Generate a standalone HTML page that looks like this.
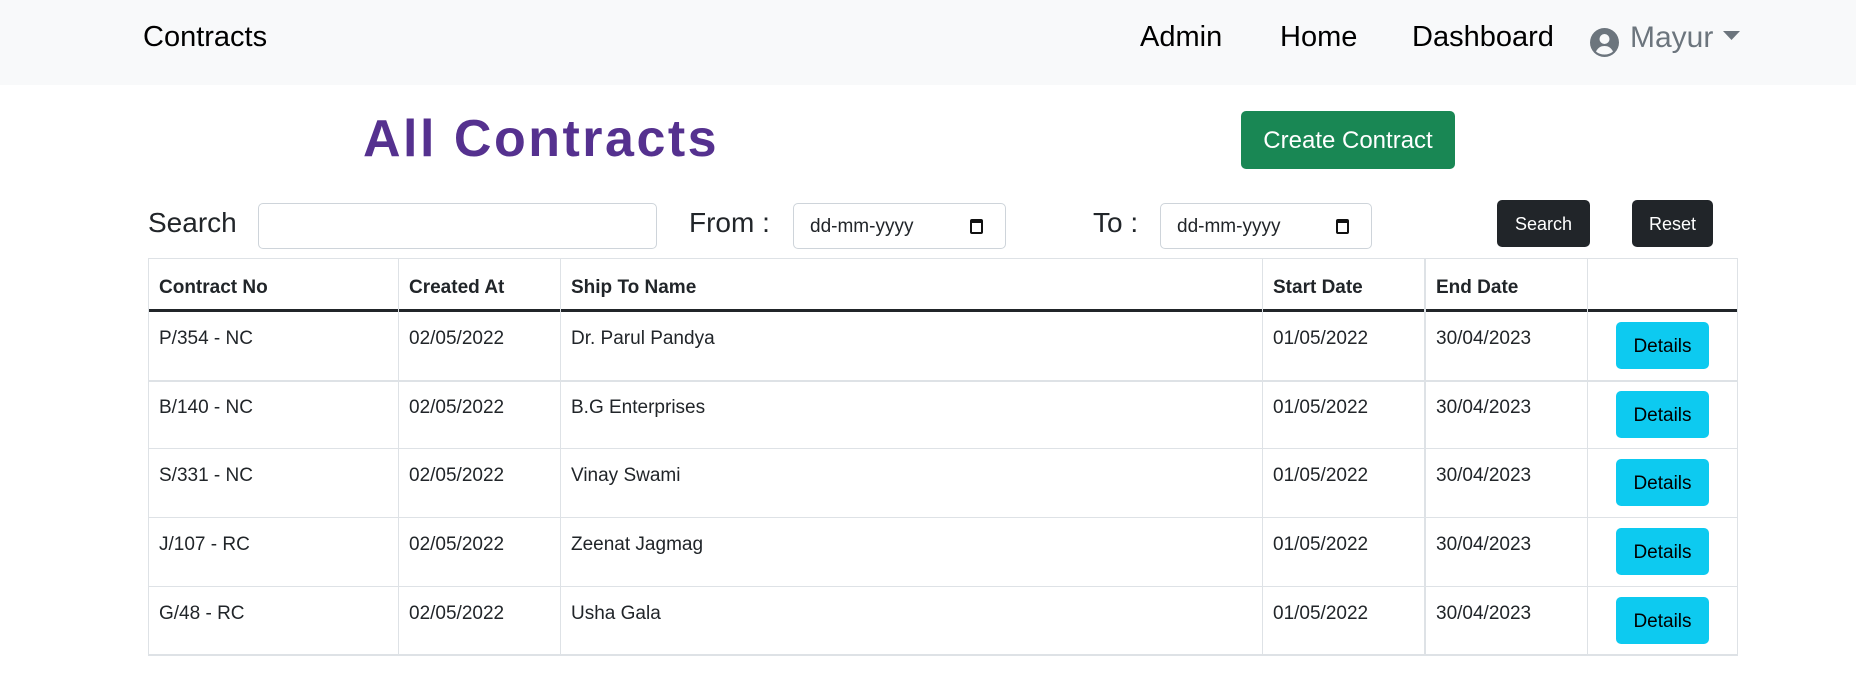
<!DOCTYPE html>
<html><head><meta charset="utf-8"><style>
*{box-sizing:border-box;margin:0;padding:0}
body{width:1856px;height:676px;background:#fff;font-family:"Liberation Sans",sans-serif;color:#212529;position:relative;overflow:hidden}
.a{position:absolute;white-space:nowrap}
.nav{position:absolute;left:0;top:0;width:1856px;height:85px;background:#f8f9fa}
.nl{font-size:29px;color:#000;top:21px}
.lbl{font-size:28px;top:207px;color:#212529}
.inp{position:absolute;border:1px solid #ced4da;border-radius:5px;background:#fff;height:46px;top:203px}
.dt{font-size:19px;color:#212529;top:216px}
.cal{position:absolute;width:13px;height:15px;border:2px solid #111;border-top-width:4px;border-radius:2px;top:219px}
.btn{position:absolute;border-radius:5px;color:#fff;text-align:center}
.dark{background:#212529;font-size:18px;top:200px;height:47px;line-height:48px}
.hl{position:absolute;background:#dee2e6}
.th{font-size:19px;font-weight:bold;top:277px}
.td{font-size:19px}
.det{position:absolute;left:1616px;width:93px;height:47px;background:#0dcaf0;border-radius:5px;font-size:19px;line-height:50px;text-align:center;color:#000}
</style></head><body>
<div class="nav"></div>
<div class="a nl" style="left:143px">Contracts</div>
<div class="a nl" style="left:1140px">Admin</div>
<div class="a nl" style="left:1280px">Home</div>
<div class="a nl" style="left:1412px">Dashboard</div>
<svg class="a" style="left:1590px;top:28px" width="29" height="29" viewBox="0 0 29 29"><circle cx="14.5" cy="14.5" r="14.5" fill="#6c757d"/><circle cx="14.5" cy="11" r="5" fill="#f8f9fa"/><path d="M6 23.5c2-4 5-5.5 8.5-5.5s6.5 1.5 8.5 5.5c-2.3 2-5.2 3-8.5 3s-6.2-1-8.5-3z" fill="#f8f9fa"/></svg>
<div class="a nl" style="left:1630px;color:#6c757d;font-size:30px;top:21px">Mayur</div>
<svg class="a" style="left:1723px;top:31px" width="17" height="9"><path d="M0 0h17L8.5 9z" fill="#6c757d"/></svg>

<div class="a" style="left:363px;top:109px;font-size:52px;font-weight:bold;color:#55318f;letter-spacing:2.5px">All Contracts</div>
<div class="btn" style="left:1241px;top:111px;width:214px;height:58px;background:#198754;font-size:24px;line-height:60px">Create Contract</div>

<div class="a lbl" style="left:148px">Search</div>
<div class="inp" style="left:258px;width:399px"></div>
<div class="a lbl" style="left:689px">From :</div>
<div class="inp" style="left:793px;width:213px"></div>
<div class="a dt" style="left:810px">dd-mm-yyyy</div>
<div class="cal" style="left:970px"></div>
<div class="a lbl" style="left:1093px">To :</div>
<div class="inp" style="left:1160px;width:212px"></div>
<div class="a dt" style="left:1177px">dd-mm-yyyy</div>
<div class="cal" style="left:1336px"></div>
<div class="btn dark" style="left:1497px;width:93px">Search</div>
<div class="btn dark" style="left:1632px;width:81px">Reset</div>

<div class="hl" style="left:148px;top:258px;width:1590px;height:1px"></div>
<div class="a" style="left:148px;top:309px;width:1590px;height:3px;background:#212529"></div>
<div class="hl" style="left:148px;top:380px;width:1590px;height:2px"></div>
<div class="hl" style="left:148px;top:448px;width:1590px;height:1px"></div>
<div class="hl" style="left:148px;top:517px;width:1590px;height:1px"></div>
<div class="hl" style="left:148px;top:586px;width:1590px;height:1px"></div>
<div class="hl" style="left:148px;top:654px;width:1590px;height:2px"></div>
<div class="hl" style="left:148px;top:258px;width:1px;height:398px"></div>
<div class="hl" style="left:398px;top:258px;width:1px;height:398px"></div>
<div class="hl" style="left:560px;top:258px;width:1px;height:398px"></div>
<div class="hl" style="left:1262px;top:258px;width:1px;height:398px"></div>
<div class="hl" style="left:1424px;top:258px;width:2px;height:398px"></div>
<div class="hl" style="left:1587px;top:258px;width:1px;height:398px"></div>
<div class="hl" style="left:1737px;top:258px;width:1px;height:398px"></div>

<div class="a th" style="left:159px">Contract No</div>
<div class="a th" style="left:409px">Created At</div>
<div class="a th" style="left:571px">Ship To Name</div>
<div class="a th" style="left:1273px">Start Date</div>
<div class="a th" style="left:1436px">End Date</div>

<div class="a td" style="left:159px;top:328px">P/354 - NC</div><div class="a td" style="left:409px;top:328px">02/05/2022</div><div class="a td" style="left:571px;top:328px">Dr. Parul Pandya</div><div class="a td" style="left:1273px;top:328px">01/05/2022</div><div class="a td" style="left:1436px;top:328px">30/04/2023</div><div class="det" style="top:322px">Details</div>
<div class="a td" style="left:159px;top:397px">B/140 - NC</div><div class="a td" style="left:409px;top:397px">02/05/2022</div><div class="a td" style="left:571px;top:397px">B.G Enterprises</div><div class="a td" style="left:1273px;top:397px">01/05/2022</div><div class="a td" style="left:1436px;top:397px">30/04/2023</div><div class="det" style="top:391px">Details</div>
<div class="a td" style="left:159px;top:465px">S/331 - NC</div><div class="a td" style="left:409px;top:465px">02/05/2022</div><div class="a td" style="left:571px;top:465px">Vinay Swami</div><div class="a td" style="left:1273px;top:465px">01/05/2022</div><div class="a td" style="left:1436px;top:465px">30/04/2023</div><div class="det" style="top:459px">Details</div>
<div class="a td" style="left:159px;top:534px">J/107 - RC</div><div class="a td" style="left:409px;top:534px">02/05/2022</div><div class="a td" style="left:571px;top:534px">Zeenat Jagmag</div><div class="a td" style="left:1273px;top:534px">01/05/2022</div><div class="a td" style="left:1436px;top:534px">30/04/2023</div><div class="det" style="top:528px">Details</div>
<div class="a td" style="left:159px;top:603px">G/48 - RC</div><div class="a td" style="left:409px;top:603px">02/05/2022</div><div class="a td" style="left:571px;top:603px">Usha Gala</div><div class="a td" style="left:1273px;top:603px">01/05/2022</div><div class="a td" style="left:1436px;top:603px">30/04/2023</div><div class="det" style="top:597px">Details</div>
</body></html>
